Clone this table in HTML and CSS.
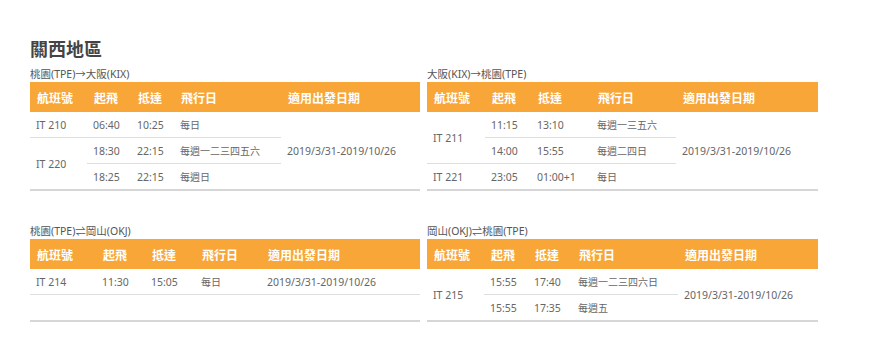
FILE: index.html
```html
<!DOCTYPE html>
<html lang="zh-Hant">
<head>
<meta charset="utf-8">
<title>關西地區</title>
<link rel="stylesheet" href="styles.css">
</head>
<body>
<section class="region">
  <h2 class="region-title">關西地區</h2>
  <div class="routes">
    <div class="route">
      <div class="route-label">桃園(TPE)→大阪(KIX)</div>
      <table class="sched sched-a">
        <colgroup><col class="c1"><col class="c2"><col class="c3"><col class="c4"><col class="c5"></colgroup>
        <thead><tr><th>航班號</th><th>起飛</th><th>抵達</th><th>飛行日</th><th>適用出發日期</th></tr></thead>
        <tbody>
          <tr><td>IT 210</td><td>06:40</td><td>10:25</td><td class="days">每日</td><td rowspan="3">2019/3/31-2019/10/26</td></tr>
          <tr><td rowspan="2">IT 220</td><td>18:30</td><td>22:15</td><td class="days">每週一二三四五六</td></tr>
          <tr><td>18:25</td><td>22:15</td><td class="days">每週日</td></tr>
        </tbody>
      </table>
    </div>
    <div class="route">
      <div class="route-label">大阪(KIX)→桃園(TPE)</div>
      <table class="sched sched-b">
        <colgroup><col class="c1"><col class="c2"><col class="c3"><col class="c4"><col class="c5"></colgroup>
        <thead><tr><th>航班號</th><th>起飛</th><th>抵達</th><th>飛行日</th><th>適用出發日期</th></tr></thead>
        <tbody>
          <tr><td rowspan="2">IT 211</td><td>11:15</td><td>13:10</td><td class="days">每週一三五六</td><td rowspan="3">2019/3/31-2019/10/26</td></tr>
          <tr><td>14:00</td><td>15:55</td><td class="days">每週二四日</td></tr>
          <tr><td>IT 221</td><td>23:05</td><td>01:00+1</td><td class="days">每日</td></tr>
        </tbody>
      </table>
    </div>
    <div class="route">
      <div class="route-label">桃園(TPE)⇌岡山(OKJ)</div>
      <table class="sched sched-c">
        <colgroup><col class="c1"><col class="c2"><col class="c3"><col class="c4"><col class="c5"></colgroup>
        <thead><tr><th>航班號</th><th>起飛</th><th>抵達</th><th>飛行日</th><th>適用出發日期</th></tr></thead>
        <tbody>
          <tr><td>IT 214</td><td>11:30</td><td>15:05</td><td class="days">每日</td><td>2019/3/31-2019/10/26</td></tr>
          <tr><td></td><td></td><td></td><td></td><td></td></tr>
        </tbody>
      </table>
    </div>
    <div class="route">
      <div class="route-label">岡山(OKJ)⇌桃園(TPE)</div>
      <table class="sched sched-d">
        <colgroup><col class="c1"><col class="c2"><col class="c3"><col class="c4"><col class="c5"></colgroup>
        <thead><tr><th>航班號</th><th>起飛</th><th>抵達</th><th>飛行日</th><th>適用出發日期</th></tr></thead>
        <tbody>
          <tr><td rowspan="2">IT 215</td><td>15:55</td><td>17:40</td><td class="days">每週一二三四六日</td><td rowspan="2">2019/3/31-2019/10/26</td></tr>
          <tr><td>15:55</td><td>17:35</td><td class="days">每週五</td></tr>
        </tbody>
      </table>
    </div>
  </div>
</section>
</body>
</html>
```

FILE: styles.css
```css
html, body {
  margin: 0;
  padding: 0;
  background: #fff;
}

body {
  font-family: "Noto Sans", "Noto Sans CJK TC", sans-serif;
  color: #666;
}

.region {
  padding: 36px 0 0 30px;
}

.region-title {
  margin: 0 0 7px;
  font-family: "Noto Sans CJK TC", sans-serif;
  font-size: 18px;
  line-height: 24px;
  font-weight: 700;
  color: #444;
}

.routes {
  display: grid;
  grid-template-columns: 390px 391px;
  column-gap: 7px;
  row-gap: 33px;
  align-items: start;
}

.route-label {
  font-size: 10.5px;
  line-height: 15px;
  color: #555;
}

.sched {
  width: 100%;
  table-layout: fixed;
  border-collapse: collapse;
  border-bottom: 2px solid #d6d6d6;
}

.sched th {
  height: 30px;
  padding: 0 7px;
  background: #f7a637;
  color: #fff;
  font-family: "Noto Sans CJK TC", sans-serif;
  font-size: 12px;
  font-weight: 700;
  text-align: left;
  white-space: nowrap;
}

.sched td {
  height: 25px;
  padding: 0 6px;
  font-size: 10.5px;
  color: #666;
  text-align: left;
  vertical-align: middle;
  border-bottom: 1px solid #dedede;
  white-space: nowrap;
}

.sched td.days {
  font-size: 10px;
}

.sched-a .c1 { width: 57px; }
.sched-a .c2 { width: 44px; }
.sched-a .c3 { width: 43px; }
.sched-a .c4 { width: 107px; }
.sched-a .c5 { width: 139px; }

.sched-b .c1 { width: 58px; }
.sched-b .c2 { width: 46px; }
.sched-b .c3 { width: 60px; }
.sched-b .c4 { width: 85px; }
.sched-b .c5 { width: 142px; }

.sched-c .c1 { width: 66px; }
.sched-c .c2 { width: 49px; }
.sched-c .c3 { width: 50px; }
.sched-c .c4 { width: 66px; }
.sched-c .c5 { width: 159px; }

.sched-d .c1 { width: 57px; }
.sched-d .c2 { width: 44px; }
.sched-d .c3 { width: 44px; }
.sched-d .c4 { width: 106px; }
.sched-d .c5 { width: 140px; }
```
